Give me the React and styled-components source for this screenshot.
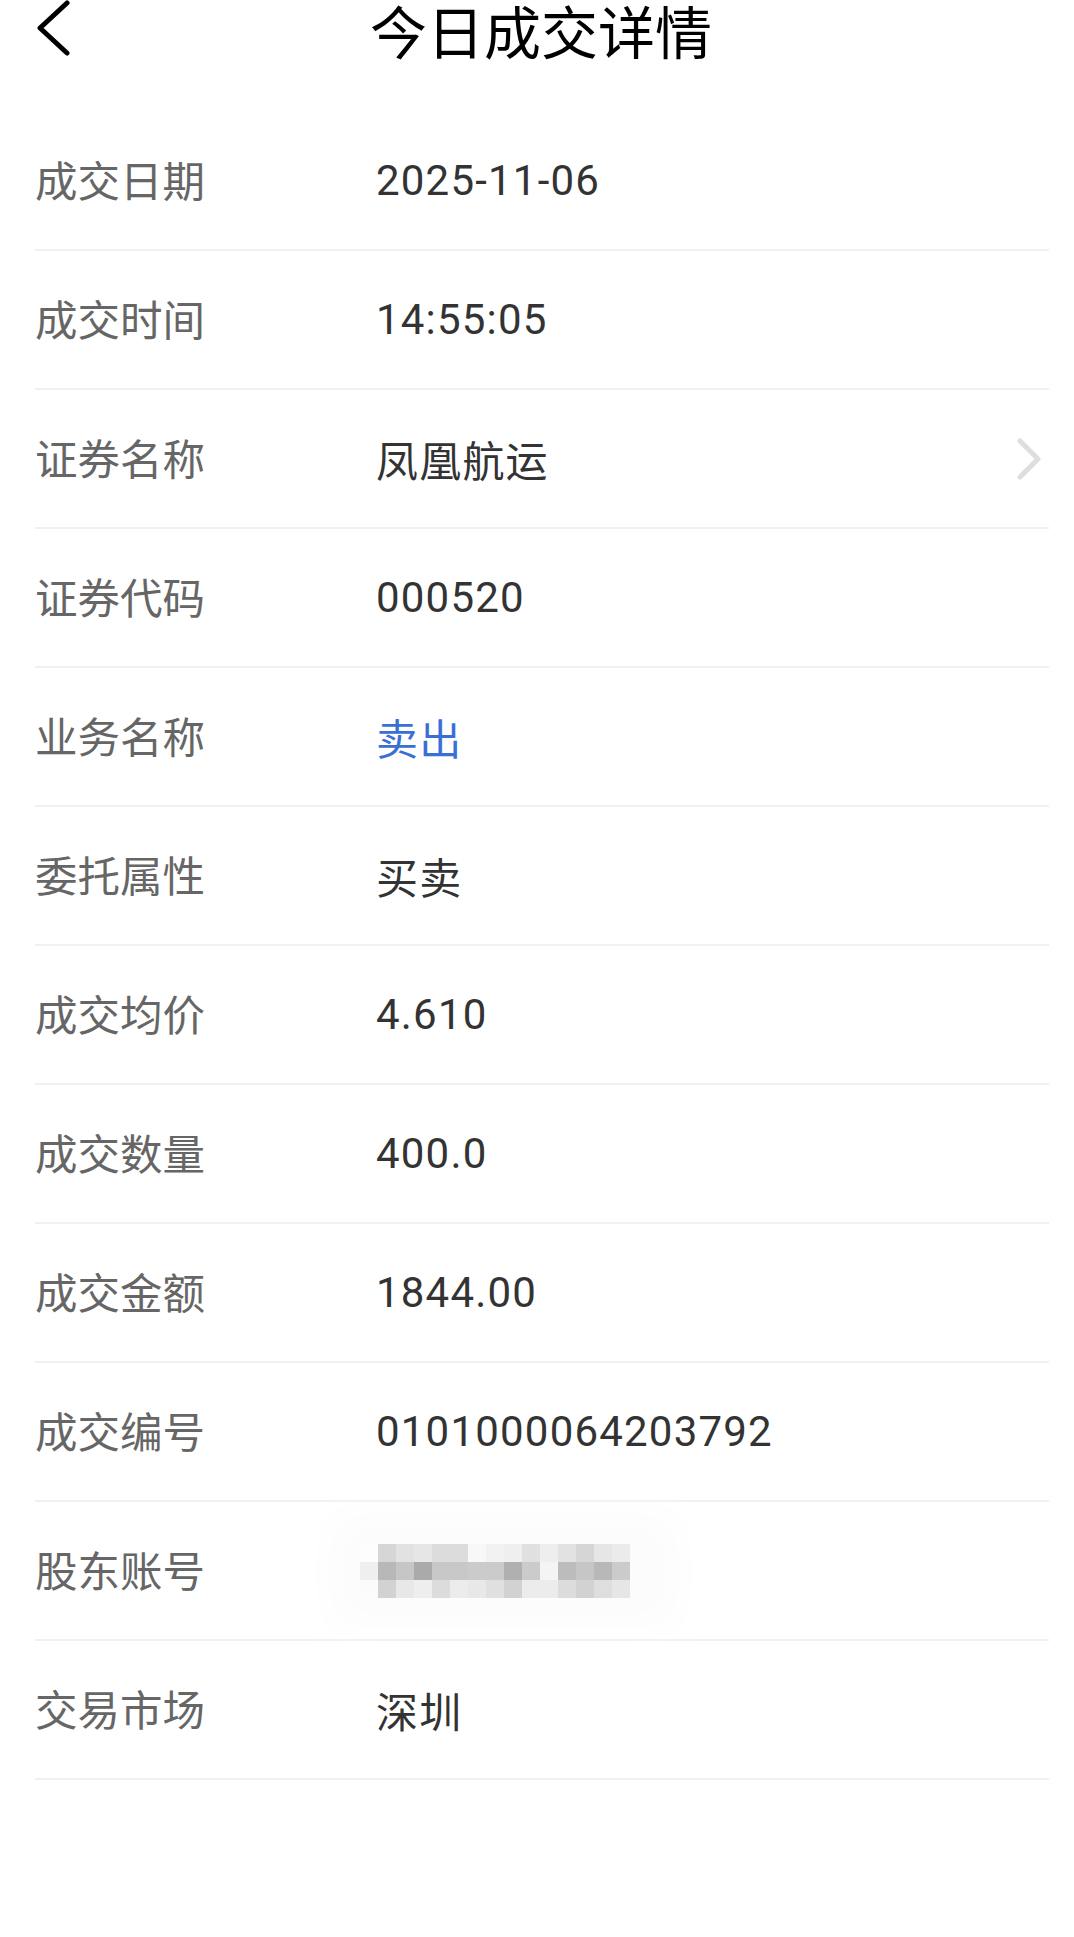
import React from 'react';
import styled, { createGlobalStyle } from 'styled-components';

const GlobalStyle = createGlobalStyle`
  body {
    margin: 0;
    background: #fff;
    font-family: Roboto, "Noto Sans CJK SC", sans-serif;
  }
`

const Page = styled.div`
  width: 1074px;
  min-height: 1937px;
  background: #fff;
`

const Header = styled.div`
  height: 112px;
  display: grid;
  grid-template-columns: 1fr auto 1fr;
  align-items: start;
`

const BackButton = styled.div`
  padding-left: 36px;
  display: flex;
  align-items: flex-start;
  height: 56px;
`

const Title = styled.div`
  font-family: "Noto Sans CJK SC", sans-serif;
  font-size: 57px;
  line-height: 58px;
  padding-left: 8px;
  color: #000;
`

const List = styled.div`
  display: flex;
  flex-direction: column;
`

const Row = styled.div`
  height: 137px;
  margin: 0 25px 0 35px;
  display: flex;
  align-items: center;
  border-bottom: 2px solid #f0f0f0;
`

const Label = styled.div`
  width: 341px;
  flex-shrink: 0;
  padding-bottom: 5px;
  font-family: "Noto Sans CJK SC", sans-serif;
  font-size: 42.5px;
  color: #666;
`

const Value = styled.div`
  flex-grow: 1;
  display: flex;
  align-items: center;
  font-family: Roboto, "Noto Sans CJK SC", sans-serif;
  font-size: 42px;
  letter-spacing: 1.2px;
  color: ${({ $accent }) => ($accent ? '#3a6fd4' : '#333')};
`

const Chevron = styled.svg`
  margin-left: auto;
  margin-right: 6px;
`

const Mosaic = styled.div`
  margin-left: -16px;
  display: grid;
  grid-template-columns: repeat(16, 18px);
  grid-auto-rows: 18px;
  box-shadow: 0 0 40px 30px #fcfcfc;
  background: #fcfcfc;
`

const Cell = styled.div`
  background: ${({ $c }) => $c};
`

const mosaicColors = [
  ['#fdfdfd', '#d6d6d6', '#e2e2e2', '#e6e6e6', '#dcdcdc', '#dcdcdc', '#f8f8f8', '#f2f2f2', '#efefef', '#e0e0e0', '#eeeeee', '#e2e2e2', '#d6d6d6', '#e6e6e6', '#ebebeb', '#fcfcfc'],
  ['#efefef', '#b8b8b8', '#c6c6c6', '#aaaaaa', '#c8c8c8', '#c8c8c8', '#cbcbcb', '#cbcbcb', '#b0b0b0', '#cbcbcb', '#f4f4f4', '#bcbcbc', '#c6c6c6', '#b8b8b8', '#cbcbcb', '#fcfcfc'],
  ['#fbfbfb', '#d2d2d2', '#e8e8e8', '#eeeeee', '#dcdcdc', '#ececec', '#e8e8e8', '#e0e0e0', '#d2d2d2', '#ececec', '#ececec', '#dcdcdc', '#d2d2d2', '#dedede', '#e6e6e6', '#fcfcfc'],
]

const rows = [
  { label: '成交日期', value: '2025-11-06' },
  { label: '成交时间', value: '14:55:05' },
  { label: '证券名称', value: '凤凰航运', link: true },
  { label: '证券代码', value: '000520' },
  { label: '业务名称', value: '卖出', accent: true },
  { label: '委托属性', value: '买卖' },
  { label: '成交均价', value: '4.610' },
  { label: '成交数量', value: '400.0' },
  { label: '成交金额', value: '1844.00' },
  { label: '成交编号', value: '0101000064203792' },
  { label: '股东账号', masked: true },
  { label: '交易市场', value: '深圳' },
]

function App() {
  return (
    <Page>
      <GlobalStyle />
      <Header>
        <BackButton>
          <svg width="36" height="56" viewBox="0 0 36 56">
            <polyline points="31,3 4,28 31,53" fill="none" stroke="#000" strokeWidth="5" strokeLinecap="round" strokeLinejoin="round" />
          </svg>
        </BackButton>
        <Title>今日成交详情</Title>
        <div />
      </Header>
      <List>
        {rows.map(({ label, value, link, accent, masked }) => (
          <Row key={label}>
            <Label>{label}</Label>
            <Value $accent={accent}>
              {masked ? (
                <Mosaic>
                  {mosaicColors.flat().map((c, i) => <Cell key={i} $c={c} />)}
                </Mosaic>
              ) : value}
              {link && (
                <Chevron width="26" height="42" viewBox="0 0 26 42">
                  <polyline points="3,3 21,21 3,39" fill="none" stroke="#dedede" strokeWidth="5" strokeLinecap="round" strokeLinejoin="round" />
                </Chevron>
              )}
            </Value>
          </Row>
        ))}
      </List>
    </Page>
  )
}

export default App;
